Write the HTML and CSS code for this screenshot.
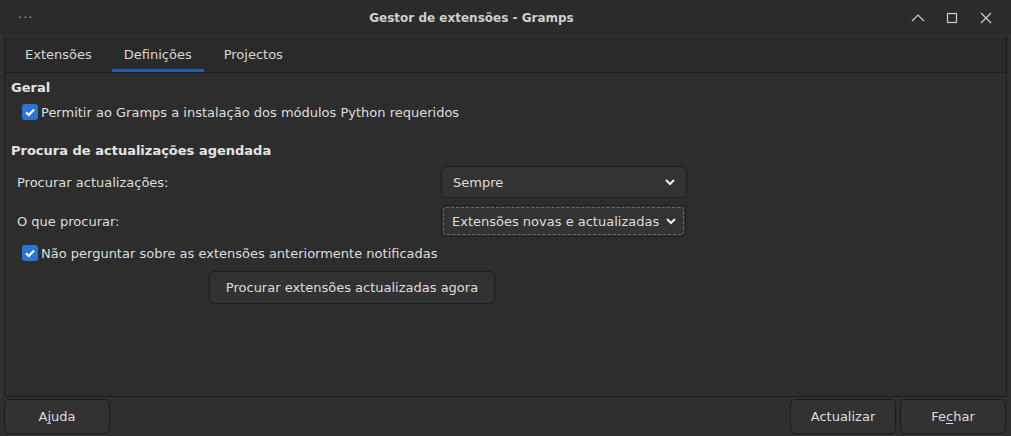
FILE: index.html
```html
<!DOCTYPE html>
<html lang="pt">
<head>
    <meta charset="UTF-8">
    <title>Gestor de extensões - Gramps</title>
    <link rel="stylesheet" href="styles.css">
</head>
<body>
    <div class="window">
        <div class="titlebar">
            <span class="menu-dots">···</span>
            <span class="title">Gestor de extensões - Gramps</span>
            <div class="controls">
                <svg width="16" height="16" viewBox="0 0 16 16"><path d="M2 11 L8 5 L14 11" fill="none" stroke="#cfcfcf" stroke-width="1.2"/></svg>
                <svg width="16" height="16" viewBox="0 0 16 16"><rect x="3.5" y="3.5" width="9" height="9" fill="none" stroke="#cfcfcf" stroke-width="1.2"/></svg>
                <svg width="16" height="16" viewBox="0 0 16 16"><path d="M3 3 L13 13 M13 3 L3 13" fill="none" stroke="#cfcfcf" stroke-width="1.2"/></svg>
            </div>
        </div>

        <div class="notebook">
            <div class="tabs">
                <div class="tab">Extensões</div>
                <div class="tab active">Definições</div>
                <div class="tab">Projectos</div>
            </div>
            <div class="page">
                <h3>Geral</h3>
                <label class="check first"><span class="box"><svg width="12" height="12" viewBox="0 0 12 12"><path d="M2 6.2 L4.8 9 L10 3.5" fill="none" stroke="#fff" stroke-width="2.2"/></svg></span>Permitir ao Gramps a instalação dos módulos Python requeridos</label>

                <h3 class="second">Procura de actualizações agendada</h3>
                <div class="row">
                    <span class="lbl">Procurar actualizações:</span>
                    <div class="combo"><span>Sempre</span><svg width="12" height="12" viewBox="0 0 12 12"><path d="M2 4 L6 8 L10 4" fill="none" stroke="#eee" stroke-width="2"/></svg></div>
                </div>
                <div class="row">
                    <span class="lbl">O que procurar:</span>
                    <div class="combo focus"><span>Extensões novas e actualizadas</span><svg width="12" height="12" viewBox="0 0 12 12"><path d="M2 4 L6 8 L10 4" fill="none" stroke="#eee" stroke-width="2"/></svg></div>
                </div>
                <label class="check"><span class="box"><svg width="12" height="12" viewBox="0 0 12 12"><path d="M2 6.2 L4.8 9 L10 3.5" fill="none" stroke="#fff" stroke-width="2.2"/></svg></span>Não perguntar sobre as extensões anteriormente notificadas</label>
                <div class="center-btn">
                    <button class="btn wide">Procurar extensões actualizadas agora</button>
                </div>
            </div>
        </div>

        <div class="actions">
            <button class="btn">A<u>j</u>uda</button>
            <div class="right">
                <button class="btn">Actualizar</button>
                <button class="btn">Fe<u>c</u>har</button>
            </div>
        </div>
    </div>
</body>
</html>
```

FILE: styles.css
```css
body { margin: 0; background: #2b2b2b; font-family: "DejaVu Sans", sans-serif; font-size: 13px; color: #dedede; }
.window { width: 1011px; height: 436px; display: flex; flex-direction: column; background: #2f2f2f; }

.titlebar { height: 35px; background: #2b2b2b; display: flex; align-items: center; border-bottom: 1px solid #333; }
.menu-dots { width: 48px; padding-left: 18px; box-sizing: border-box; color: #9a9a9a; letter-spacing: 1px; }
.title { flex: 1; text-align: center; padding-right: 15px; font-weight: bold; font-size: 12px; color: #cfcfcf; }
.controls { margin-right: 17px; display: flex; gap: 18px; }

.notebook { margin: 0 4px; border: 1px solid #1d1d1d; border-top: none; height: 360px; display: flex; flex-direction: column; background: #2d2d2d; }
.tabs { height: 36px; display: flex; gap: 8px; padding-left: 8px; background: #2a2a2a; border-bottom: 1px solid #1d1d1d; }
.tab { padding: 3px 12px 0; display: flex; align-items: center; color: #d8d8d8; border-bottom: 3px solid transparent; }
.tab.active { border-bottom-color: #1d5fae; }

.page { flex: 1; padding: 6px 0 0 6px; }
h3 { margin: 0; font-size: 13px; font-weight: bold; color: #e4e4e4; height: 17px; line-height: 17px; }
h3.second { margin-top: 21px; }

.check { display: flex; align-items: center; margin-left: 11px; height: 18px; margin-top: 7px; color: #dedede; }
.box { width: 16px; height: 16px; border-radius: 3px; background: #2c74d4; display: flex; align-items: center; justify-content: center; margin-right: 3px; }

.row { display: flex; align-items: center; height: 32px; margin-top: 7px; }
.lbl { width: 424px; flex-shrink: 0; padding-left: 6px; }
.combo { flex-shrink: 0; width: 223px; height: 30px; border: 1px solid #1e1e1e; border-radius: 5px; background: #333; display: flex; align-items: center; justify-content: space-between; padding: 0 10px 0 11px; }
.combo.focus { width: 225px; padding: 0 8px 0 10px; outline: 1px dashed #6a6a6a; outline-offset: -3px; }

.center-btn { padding-left: 198px; margin-top: 9px; }
.btn { font-family: "DejaVu Sans", sans-serif; font-size: 13px; color: #dedede; background: #323232; border: 1px solid #1c1c1c; border-radius: 5px; height: 33px; cursor: pointer; }
.btn.wide { width: 286px; }
.btn u { text-decoration-thickness: 1px; text-underline-offset: 2px; }

.actions { display: flex; justify-content: space-between; padding: 2px 5px 0 4px; }
.actions .btn { width: 106px; height: 35px; }
.right { display: flex; gap: 4px; }
```
